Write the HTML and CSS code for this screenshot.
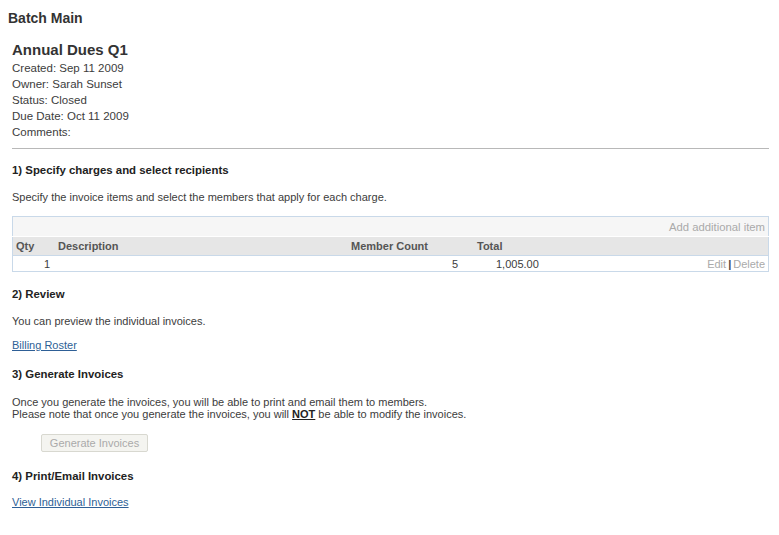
FILE: index.html
```html
<!DOCTYPE html>
<html lang="en">
<head>
    <meta charset="UTF-8">
    <title>Batch Main</title>
    <link rel="stylesheet" href="styles.css">
</head>
<body>

<h1 class="page-title">Batch Main</h1>

<div class="batch">
    <h2 class="batch-name">Annual Dues Q1</h2>
    <div class="details">
        <div>Created: Sep 11 2009</div>
        <div>Owner: Sarah Sunset</div>
        <div>Status: Closed</div>
        <div>Due Date: Oct 11 2009</div>
        <div>Comments:</div>
    </div>

    <hr class="divider">

    <h3 class="step first">1) Specify charges and select recipients</h3>
    <p class="note">Specify the invoice items and select the members that apply for each charge.</p>

    <table class="items">
        <tr class="toolbar">
            <td colspan="5"><span class="muted">Add additional item</span></td>
        </tr>
        <tr class="head">
            <th class="qty">Qty</th>
            <th class="desc">Description</th>
            <th class="count">Member Count</th>
            <th class="total">Total</th>
            <th></th>
        </tr>
        <tr class="row">
            <td class="qty-val">1</td>
            <td></td>
            <td class="count-val">5</td>
            <td class="total-val">1,005.00</td>
            <td class="actions"><span class="muted">Edit</span><span class="sep">|</span><span class="muted">Delete</span></td>
        </tr>
    </table>

    <h3 class="step">2) Review</h3>
    <p class="note">You can preview the individual invoices.</p>
    <p class="note link-line"><a href="#">Billing Roster</a></p>

    <h3 class="step">3) Generate Invoices</h3>
    <p class="note tight">Once you generate the invoices, you will be able to print and email them to members.<br>
    Please note that once you generate the invoices, you will <b class="warn">NOT</b> be able to modify the invoices.</p>
    <div class="button-row">
        <button disabled>Generate Invoices</button>
    </div>

    <h3 class="step after-button">4) Print/Email Invoices</h3>
    <p class="note link-first"><a href="#">View Individual Invoices</a></p>
</div>

</body>
</html>
```

FILE: styles.css
```css
body {
    font-family: 'Liberation Sans', Arial, sans-serif;
    font-size: 11px;
    color: #3c3c3c;
    background-color: #fff;
    margin: 0;
    padding: 8px 10px 0 8px;
}
.page-title {
    font-size: 14px;
    font-weight: bold;
    color: #333;
    margin: 2px 0 0 0;
}
.batch {
    padding-left: 4px;
}
.batch-name {
    font-size: 15px;
    font-weight: bold;
    color: #333;
    margin: 15px 0 0 0;
}
.details {
    font-size: 11.5px;
    line-height: 16px;
    margin-top: 2px;
}
.divider {
    border: none;
    border-top: 1px solid #b8b8b8;
    margin: 8px 0 0 0;
}
.step {
    font-size: 11.4px;
    line-height: 14px;
    font-weight: bold;
    color: #222;
    margin: 15px 0 0 0;
}
.step.first {
    margin-top: 14px;
}
.step.after-button {
    margin-top: 17px;
}
.note {
    margin: 13px 0 0 0;
    line-height: 14px;
}
.note.link-line {
    margin-top: 10px;
}
.note.link-first {
    margin-top: 12px;
}
.note.tight {
    line-height: 12px;
    margin-top: 15px;
}
a {
    color: #2e5f96;
    text-decoration: underline;
}
.warn {
    text-decoration: underline;
    color: #222;
}
.items {
    width: 100%;
    border-collapse: collapse;
    border: 1px solid #c9d9e9;
    margin-top: 12px;
    margin-bottom: 0;
}
.items td, .items th {
    padding: 0 3px;
    font-size: 11px;
}
.toolbar td {
    background-color: #f6f6f6;
    text-align: right;
    height: 19px;
    border-bottom: 1px solid #fff;
}
.toolbar .muted {
    font-size: 11.3px;
}
.head th {
    background-color: #e6e6e6;
    color: #555;
    text-align: left;
    height: 18px;
    border-bottom: 1px solid #c9d9e9;
}
.row td {
    height: 15px;
}
.qty { width: 36px; }
.desc { width: 287px; }
.count { width: 120px; }
.total { width: 80px; }
.qty-val {
    padding-left: 31px !important;
}
.count-val {
    text-align: right;
    padding-right: 16px !important;
}
.total-val {
    padding-left: 22px !important;
}
.actions {
    text-align: right;
}
.muted {
    color: #aaa;
}
.sep {
    color: #444;
    font-weight: bold;
    margin: 0 2px;
}
.button-row {
    padding-left: 29px;
    margin-top: 14px;
}
button {
    font-family: 'Liberation Sans', Arial, sans-serif;
    font-size: 11px;
    color: #aaa;
    background-color: #f4f4f0;
    border: 1px solid #d8d8d0;
    border-radius: 2px;
    width: 107px;
    height: 18px;
    padding: 0;
    display: block;
}
```
